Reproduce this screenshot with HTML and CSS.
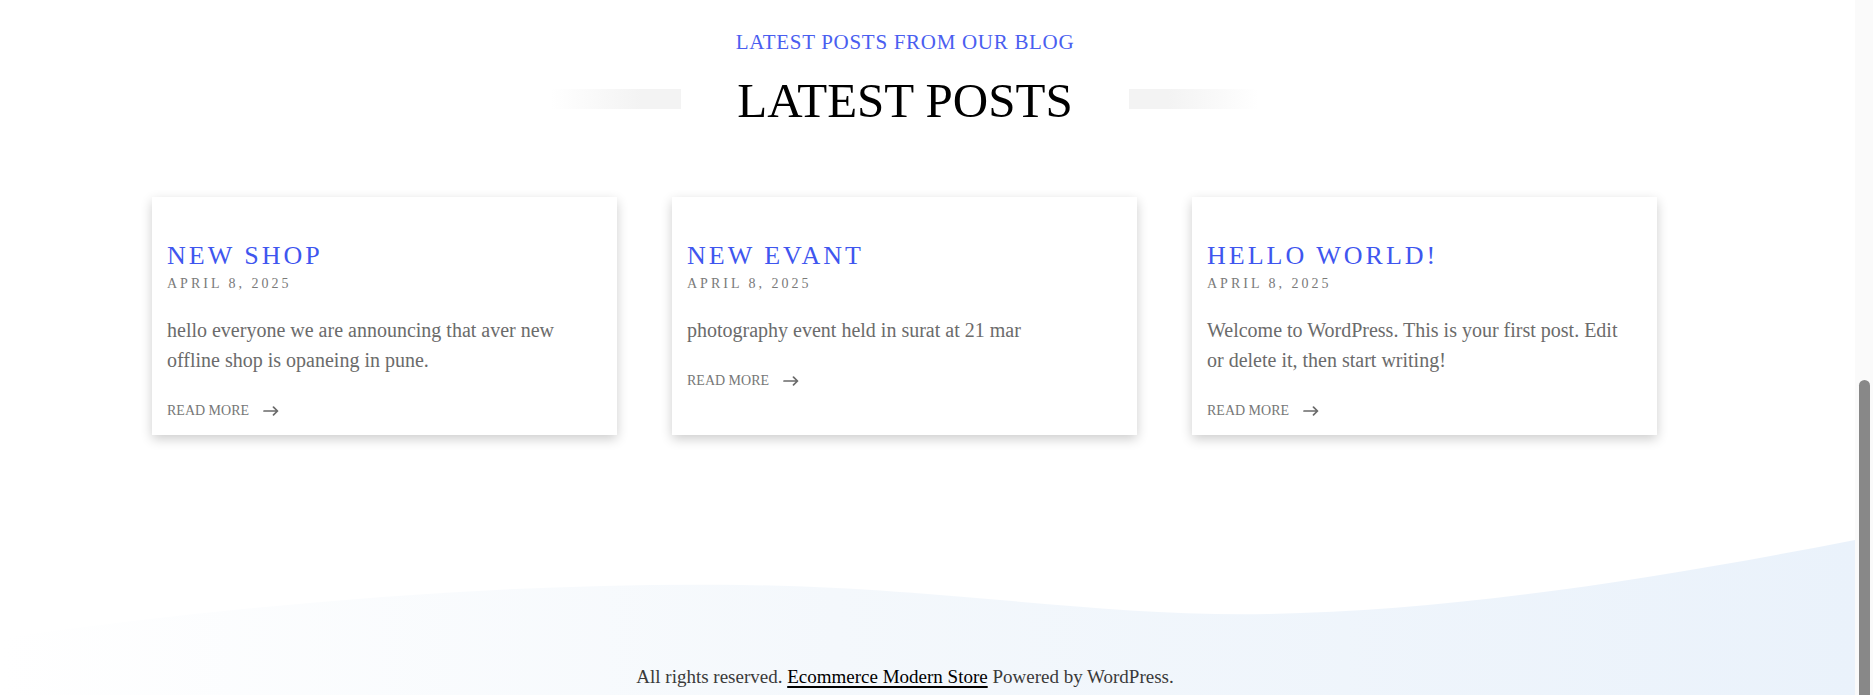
FILE: index.html
```html
<!DOCTYPE html>
<html lang="en">
<head>
<meta charset="utf-8">
<title>Latest Posts</title>
<link rel="stylesheet" href="styles.css">
</head>
<body>
<div class="frame">
  <div class="page">
    <section class="blog">
      <p class="eyebrow">LATEST POSTS FROM OUR BLOG</p>
      <div class="heading-row">
        <span class="bar bar-left"></span>
        <h2 class="heading">LATEST POSTS</h2>
        <span class="bar bar-right"></span>
      </div>
      <div class="cards">
        <article class="card">
          <h3 class="card-title">NEW SHOP</h3>
          <div class="card-date">APRIL 8, 2025</div>
          <p class="card-text">hello everyone we are announcing that aver new offline shop is opaneing in pune.</p>
          <a class="read-more" href="#">READ MORE
            <svg class="arrow" width="16" height="10" viewBox="0 0 16 10"><path d="M1 5H14.5M10.5 1.2L14.5 5L10.5 8.8" fill="none" stroke="#6a6a6a" stroke-width="1.7" stroke-linecap="round" stroke-linejoin="round"/></svg>
          </a>
        </article>
        <article class="card">
          <h3 class="card-title">NEW EVANT</h3>
          <div class="card-date">APRIL 8, 2025</div>
          <p class="card-text">photography event held in surat at 21 mar</p>
          <a class="read-more" href="#">READ MORE
            <svg class="arrow" width="16" height="10" viewBox="0 0 16 10"><path d="M1 5H14.5M10.5 1.2L14.5 5L10.5 8.8" fill="none" stroke="#6a6a6a" stroke-width="1.7" stroke-linecap="round" stroke-linejoin="round"/></svg>
          </a>
        </article>
        <article class="card">
          <h3 class="card-title">HELLO WORLD!</h3>
          <div class="card-date">APRIL 8, 2025</div>
          <p class="card-text">Welcome to WordPress. This is your first post. Edit or delete it, then start writing!</p>
          <a class="read-more" href="#">READ MORE
            <svg class="arrow" width="16" height="10" viewBox="0 0 16 10"><path d="M1 5H14.5M10.5 1.2L14.5 5L10.5 8.8" fill="none" stroke="#6a6a6a" stroke-width="1.7" stroke-linecap="round" stroke-linejoin="round"/></svg>
          </a>
        </article>
      </div>
    </section>
    <footer class="footer">
      <svg class="wave" viewBox="0 0 1855 175" preserveAspectRatio="none" width="1855" height="175">
        <defs>
          <linearGradient id="waveGrad" x1="0" y1="0" x2="1" y2="0">
            <stop offset="0" stop-color="#ffffff"/>
            <stop offset="0.45" stop-color="#f4f8fc"/>
            <stop offset="1" stop-color="#eaf2fb"/>
          </linearGradient>
        </defs>
        <path d="M0 118C250 84 500 62 742 65C950 68 1100 97 1268 94C1450 91 1650 60 1855 20L1855 175L0 175Z" fill="url(#waveGrad)"/>
      </svg>
      <div class="footer-inner">
        <p class="copyright">All rights reserved. <a href="#">Ecommerce Modern Store</a> Powered by WordPress.</p>
      </div>
    </footer>
  </div>
  <div class="scrollbar"><div class="thumb"></div></div>
</div>
</body>
</html>
```

FILE: styles.css
```css
html, body {
  margin: 0;
  padding: 0;
  height: 695px;
  overflow: hidden;
  background: #ffffff;
}

body {
  font-family: "Liberation Serif", "Times New Roman", serif;
}

.frame {
  display: flex;
  height: 695px;
  width: 1873px;
}

.page {
  flex: 1;
  display: flex;
  flex-direction: column;
  height: 695px;
  min-width: 0;
}

.blog {
  width: 1506px;
  margin-left: 152px;
  padding-top: 30px;
}

.eyebrow {
  margin: 0;
  text-align: center;
  font-size: 21px;
  line-height: 25px;
  letter-spacing: 0.7px;
  color: #4a5ef0;
}

.heading-row {
  display: flex;
  justify-content: center;
  align-items: center;
  gap: 56px;
  margin-top: 17px;
}

.heading {
  margin: 0;
  font-weight: 400;
  font-size: 49px;
  line-height: 57px;
  color: #000;
}

.bar {
  display: block;
  width: 130px;
  height: 20px;
  margin-bottom: 4px;
}

.bar-left {
  background: linear-gradient(to right, rgba(243, 243, 243, 0), #f3f3f3 70%);
}

.bar-right {
  background: linear-gradient(to right, #f3f3f3 30%, rgba(243, 243, 243, 0));
}

.cards {
  display: grid;
  grid-template-columns: repeat(3, 465px);
  gap: 55px;
  margin-top: 68px;
}

.card {
  background: #fff;
  box-shadow: 0 4px 11px rgba(0, 0, 0, 0.2);
  padding: 43px 28px 14px 15px;
}

.card-title {
  margin: 0;
  font-weight: 400;
  font-size: 26px;
  line-height: 31px;
  letter-spacing: 3px;
  color: #3f56ef;
}

.card-date {
  margin-top: 3px;
  font-size: 14px;
  line-height: 20px;
  letter-spacing: 3px;
  color: #7a7a7a;
}

.card-text {
  margin: 21px 0 0;
  font-size: 20px;
  line-height: 30px;
  color: #6b6b6b;
}

.read-more {
  display: inline-flex;
  align-items: center;
  gap: 14px;
  margin-top: 26px;
  font-size: 14px;
  line-height: 20px;
  color: #777;
  text-decoration: none;
}

.arrow {
  display: block;
}

.footer {
  position: relative;
  margin-top: auto;
  height: 175px;
  display: flex;
  align-items: flex-end;
}

.wave {
  position: absolute;
  left: 0;
  top: 0;
  width: 100%;
  height: 100%;
  display: block;
}

.footer-inner {
  position: relative;
  width: 1506px;
  margin-left: 152px;
  padding-bottom: 4px;
}

.copyright {
  margin: 0;
  text-align: center;
  font-size: 19px;
  line-height: 28px;
  color: #3a3a3a;
}

.copyright a {
  color: #000;
  text-decoration: underline;
  text-decoration-thickness: 2px;
  text-underline-offset: 3px;
}

.scrollbar {
  width: 18px;
  height: 695px;
  background: #fafafa;
  display: flex;
  flex-direction: column;
}

.thumb {
  margin-top: 380px;
  margin-left: 4px;
  width: 11px;
  flex: 1;
  background: #888888;
  border-radius: 6px 6px 0 0;
}
```
